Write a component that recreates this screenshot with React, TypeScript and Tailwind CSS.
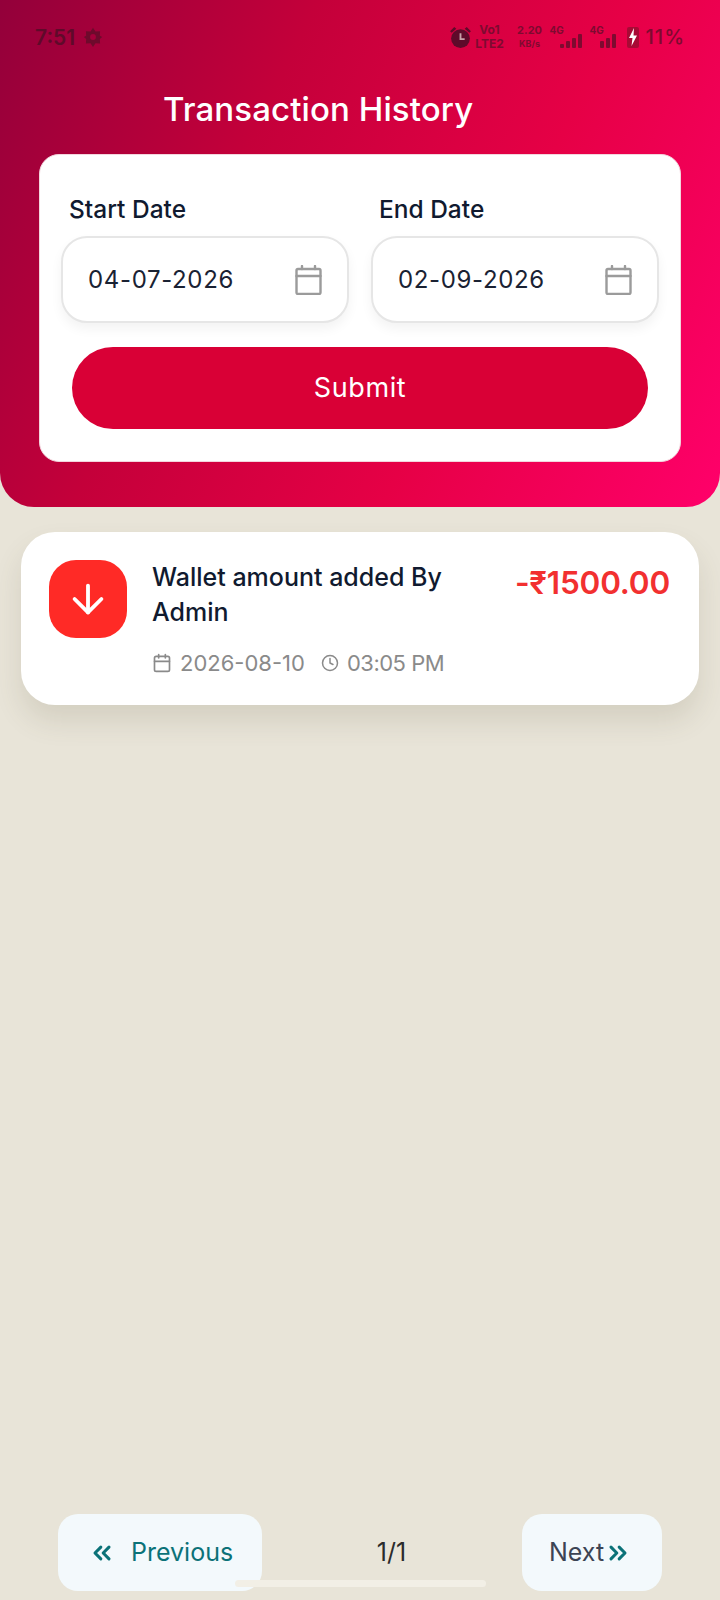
import { ArrowDown, Calendar, ChevronsLeft, ChevronsRight, Clock } from "lucide-react";

function Bars({ n }: { n: number }) {
  const hs = [4, 7, 10, 14].slice(4 - n);
  return (
    <div className="flex items-end gap-[2px] h-[14px]">
      {hs.map((h, i) => (
        <svg key={i} width="4" height={h} className="block"><rect width="4" height={h} rx="1" fill="currentColor" /></svg>
      ))}
    </div>
  );
}

function DateField({ label, value }: { label: string; value: string }) {
  return (
    <div className="w-[288px]">
      <div className="ml-[8px] text-[24.500px] leading-[30px] font-medium text-[#101a2f]">{label}</div>
      <div className="mt-[12px] h-[87px] rounded-[26px] border-2 border-[#e6e6e6] bg-white shadow-[0_6px_12px_rgba(0,0,0,0.05)] flex items-center justify-between pl-[25px] pr-[25px]">
        <span className="text-[24px] tracking-[0.65px] text-[#1a2233]">{value}</span>
        <svg width="27" height="30" viewBox="0 0 27 30" fill="none" stroke="#9b9b9b" strokeWidth="2.4" strokeLinejoin="round" strokeLinecap="round">
          <rect x="1.500" y="4" width="24" height="25" rx="1.500" />
          <path d="M1.500 11h24M7 1V4M20 1V4" />
        </svg>
      </div>
    </div>
  );
}

export default function App() {
  return (
    <div className="relative w-[720px] h-[1600px] bg-[#e8e4d8] flex flex-col font-['Inter',sans-serif] overflow-hidden">
      <header className="h-[507px] rounded-b-[34px] bg-[linear-gradient(116deg,#93003a_0%,#c4003a_33%,#e60046_65%,#ff006a_100%)] px-[39px]">
        <div className="flex items-center justify-between h-[24px] mt-[25px] -mx-[4px] text-[#6e0a2c]">
          <div className="flex items-center gap-[8px]">
            <span className="text-[21px] font-semibold leading-none text-[#5f0a2a]">7:51</span>
            <svg width="20" height="20" viewBox="0 0 24 24" fill="currentColor">
              <path fillRule="evenodd" d="M12 1l3 4.500 5.500-.3-.3 5.300L23 12l-2.800 2.500.3 5.300-5.500-.3L12 24l-3-4.500-5.500.3.3-5.300L1 12l2.800-1.500-.3-5.300 5.500.3zM12 8.500a3.500 3.500 0 100 7 3.500 3.500 0 000-7z" />
            </svg>
          </div>
          <div className="flex items-center text-[#7e0a30]">
            <svg width="25" height="25" viewBox="0 0 24 24" className="text-[#5f0a2a] mr-[2px]" fill="currentColor">
              <circle cx="12" cy="13" r="9" />
              <path d="M2 6l4-4 2 1.500-4.500 4zM22 6l-4-4-2 1.500 4.500 4z" />
              <path d="M12 8v5.500h4" stroke="#c8a0a8" strokeWidth="1.800" fill="none" />
            </svg>
            <div className="text-[12px] leading-[14px] font-bold w-[30px] text-center">
              <div>Vo1</div>
              <div>LTE2</div>
            </div>
            <div className="text-[10px] leading-[13px] font-bold w-[26px] text-center ml-[12px]">
              <div className="text-[11px]">2.20</div>
              <div className="text-[9px]">KB/s</div>
            </div>
            <div className="relative w-[32px] h-[22px] ml-[7px] flex justify-end items-end">
              <span className="absolute left-0 top-[-1px] text-[10px] font-bold leading-none">4G</span>
              <Bars n={4} />
            </div>
            <div className="relative w-[26px] h-[22px] ml-[8px] flex justify-end items-end">
              <span className="absolute left-0 top-[-1px] text-[10px] font-bold leading-none">4G</span>
              <Bars n={3} />
            </div>
            <svg width="14" height="24" viewBox="0 0 14 24" className="ml-[10px]">
              <rect x="1" y="2" width="12" height="21" rx="2" fill="#a80a35" />
              <path d="M8 3L3 13H6.500L5.500 21 11 10.500H7.500z" fill="#ffffff" />
            </svg>
            <span className="text-[20px] font-medium ml-[6px] text-[#7e0a30] tracking-[1px]">11%</span>
          </div>
        </div>
        <h1 className="mt-[38px] ml-[124px] h-[44px] text-[33px] leading-[44px] font-medium text-white tracking-[0.1px]">Transaction History</h1>
        <section className="mt-[23px] h-[308px] rounded-[20px] bg-white border border-[#f3d5dd] px-[21px] pt-[39px]">
          <div className="flex justify-between">
            <DateField label="Start Date" value="04-07-2026" />
            <DateField label="End Date" value="02-09-2026" />
          </div>
          <button className="mt-[24px] ml-[11px] w-[576px] h-[82px] rounded-full bg-[#d90036] text-white text-[27px] tracking-[0.6px]">Submit</button>
        </section>
      </header>

      <article className="mt-[25px] mx-[21px] h-[173px] rounded-[34px] bg-white shadow-[0_16px_28px_rgba(90,85,60,0.14)] flex pl-[28px] pr-[29px] pt-[28px]">
        <div className="w-[78px] h-[78px] shrink-0 rounded-[27px] bg-[#ff2a26] flex items-center justify-center">
          <ArrowDown size={46} color="white" strokeWidth={2} />
        </div>
        <div className="ml-[25px] flex-1">
          <div className="text-[25px] leading-[35px] font-medium text-[#101a2f] w-[310px]">Wallet amount added By Admin</div>
          <div className="mt-[19px] flex items-center text-[#8a8a8a] text-[22px] leading-[28px]">
            <Calendar size={20} strokeWidth={2} />
            <span className="ml-[8px]">2026-08-10</span>
            <Clock size={18} strokeWidth={2} className="ml-[16px]" />
            <span className="ml-[8px] tracking-[-0.5px]">03:05 PM</span>
          </div>
        </div>
        <div className="mt-[3px] text-[31.500px] leading-[40px] font-semibold text-[#f23030] tracking-[-0.2px] whitespace-nowrap">-₹1500.00</div>
      </article>

      <nav className="mt-auto mb-[9px] mx-[58px] flex items-center justify-between">
        <button className="w-[204px] h-[77px] rounded-[20px] bg-[#f3f9fc] flex items-center pl-[30px] text-[#0b7278] text-[25px]">
          <ChevronsLeft size={28} strokeWidth={2.6} className="text-[#0b7278]" />
          <span className="ml-[15px]">Previous</span>
        </button>
        <span className="text-[25px] text-[#2b2b2b] ml-[-1px]">1/1</span>
        <button className="w-[140px] h-[77px] rounded-[20px] bg-[#f3f9fc] flex items-center pl-[27px] text-[#3c4454] text-[25px]">
          <span>Next</span>
          <ChevronsRight size={28} strokeWidth={2.6} className="text-[#0b7278]" />
        </button>
      </nav>
      <div className="absolute left-[235px] top-[1580px] w-[251px] h-[7px] rounded-full bg-[#f2efe6]" />
    </div>
  );
}
